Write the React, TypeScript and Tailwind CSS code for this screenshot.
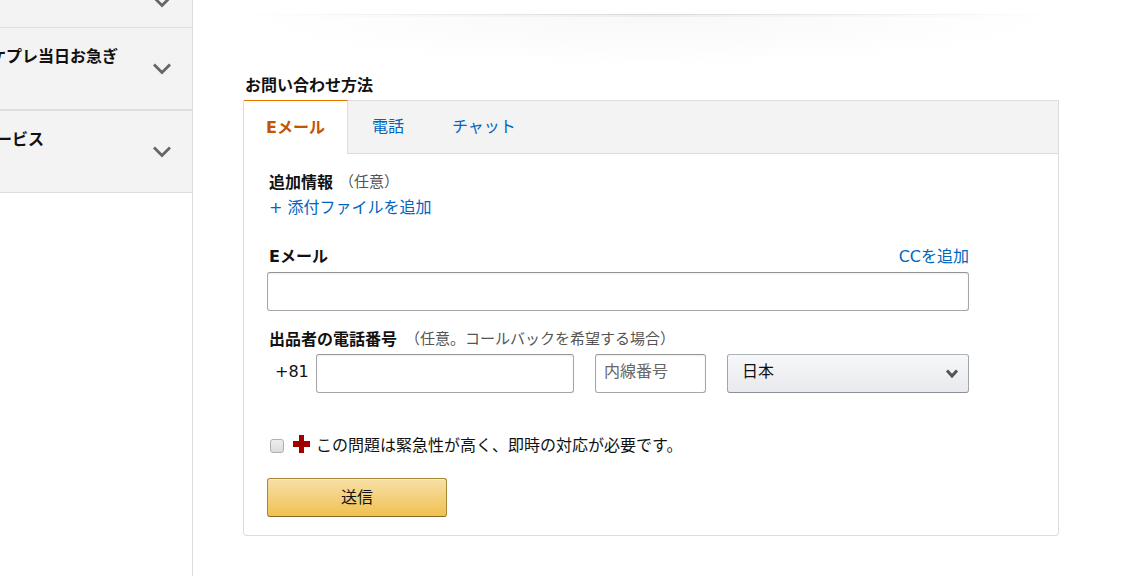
import { useState } from "react";

const tabs = ["Eメール", "電話", "チャット"];

const sections = [
  { title: "ケプレ当日お急ぎ", className: "-ml-2.5" },
  { title: "ービス", className: "-ml-1" },
];

const inputClass =
  "h-[39px] min-w-0 rounded-[3px] border border-[#a6a6a6] border-t-[#949494] bg-white px-2 pb-1 text-base text-[#111] outline-none shadow-[inset_0_1px_2px_rgba(0,0,0,0.07)] placeholder:text-[#666] focus:border-[#e77600]";

function Chevron() {
  return (
    <svg width="18" height="12" viewBox="0 0 18 12" fill="none" stroke="#666" strokeWidth="2.8" aria-hidden="true">
      <path d="M1 1.5 L9 9.5 L17 1.5" />
    </svg>
  );
}

function Sidebar() {
  return (
    <aside className="w-[193px] shrink-0 overflow-hidden border-r border-[#ddd]">
      <button aria-label="開く" className="flex h-7 w-full items-start justify-end border-b border-[#ddd] bg-[#f3f3f3] pr-[21px]">
        <span className="-mt-1">
          <Chevron />
        </span>
      </button>
      {sections.map((s, i) => (
        <button
          key={s.title}
          className={`flex w-full items-center justify-between border-b border-[#ddd] bg-[#f3f3f3] pr-[21px] ${i > 0 ? "h-[83px] border-t" : "h-[82px]"}`}
        >
          <span className={`pb-6 font-bold whitespace-nowrap ${s.className}`}>{s.title}</span>
          <Chevron />
        </button>
      ))}
    </aside>
  );
}

// 区切り線と下方向の薄い影
function Divider() {
  return (
    <div className="mt-3.5 h-[60px]">
      <div className="h-px bg-linear-to-r from-white via-[#d8d8d8] to-white" />
      <div className="h-0.5 bg-linear-to-r from-white via-[#eeeeee] to-white" />
      <div className="h-12 bg-[radial-gradient(50%_100%_at_50%_0%,#f8f8f8,#ffffff)]" />
    </div>
  );
}

function ContactForm() {
  return (
    <form className="pt-4 pr-[89px] pb-[18px] pl-[23px] leading-[25px]" onSubmit={(e) => e.preventDefault()}>
      <div className="flex h-[25px] items-center pl-0.5">
        <span className="font-bold">追加情報</span>
        <span className="ml-1.5 text-[15px] text-[#555]">（任意）</span>
      </div>
      <div className="flex h-[25px] items-center pl-0.5">
        <a href="#attach" className="text-[#0066c0]">+ 添付ファイルを追加</a>
      </div>

      <div className="mt-6 flex h-[25px] items-center justify-between pl-0.5">
        <label htmlFor="email" className="font-bold">Eメール</label>
        <a href="#cc" className="text-[#0066c0]">CCを追加</a>
      </div>
      <input id="email" type="email" className={`mt-[3px] block w-full ${inputClass}`} />

      <div className="mt-4 flex h-[25px] items-center pl-0.5">
        <label htmlFor="phone" className="font-bold">出品者の電話番号</label>
        <span className="ml-2 text-[15px] text-[#555]">（任意。コールバックを希望する場合）</span>
      </div>
      <div className="mt-0.5 flex gap-[21px]">
        <div className="flex min-w-0 flex-1 items-center">
          <span className="w-[49px] shrink-0 pb-1 pl-2">+81</span>
          <input id="phone" type="tel" className={`flex-1 ${inputClass}`} />
        </div>
        <input aria-label="内線番号" placeholder="内線番号" className={`w-[111px] ${inputClass}`} />
        <div className="relative w-[242px]">
          <select
            aria-label="国"
            className="h-[39px] w-full appearance-none rounded-[3px] border border-[#a2a6ac] border-t-[#adb1b8] border-b-[#8d9096] bg-linear-to-b from-[#f7f8fa] to-[#e7e9ec] px-3.5 pb-1 text-base text-[#111]"
          >
            <option>日本</option>
          </select>
          <svg
            className="pointer-events-none absolute top-[15px] right-2.5"
            width="14"
            height="10"
            viewBox="0 0 14 10"
            fill="none"
            stroke="#555"
            strokeWidth="3"
            aria-hidden="true"
          >
            <path d="M2 1.5 L7 7 L12 1.5" />
          </svg>
        </div>
      </div>

      <div className="mt-10 flex h-[25px] items-center pl-[3px]">
        <input
          id="urgent"
          type="checkbox"
          className="size-3.5 appearance-none rounded-[3px] border border-[#b0b0b0] bg-linear-to-b from-[#eee] to-[#dcdcdc] checked:bg-[#0066c0]"
        />
        <svg className="mb-1 ml-[9px]" width="17" height="18" viewBox="0 0 17 18" fill="#a00000" aria-hidden="true">
          <path d="M6 0h5v6h6v6h-6v6H6v-6H0V6h6z" />
        </svg>
        <label htmlFor="urgent" className="ml-1.5">この問題は緊急性が高く、即時の対応が必要です。</label>
      </div>

      <button
        type="submit"
        className="mt-5 block h-[39px] w-[180px] rounded-[3px] border border-[#a88734] border-b-[#846a29] bg-linear-to-b from-[#f7dfa5] to-[#f0c14b] shadow-[inset_0_1px_0_rgba(255,255,255,0.4)]"
      >
        送信
      </button>
    </form>
  );
}

export default function App() {
  const [active, setActive] = useState(0);

  return (
    <div className="flex min-h-screen bg-white font-['DejaVu_Sans','Noto_Sans_CJK_JP',sans-serif] text-base text-[#111]">
      <Sidebar />
      <main className="min-w-0 flex-1 pr-[89px] pl-[50px]">
        <Divider />
        <h2 className="pt-0.5 pl-0.5 leading-5 font-bold">お問い合わせ方法</h2>
        <div className="mt-1 rounded-b border border-t-0 border-[#ddd]">
          <div role="tablist" className="flex h-[54px] bg-[#f3f3f3]">
            {tabs.map((t, i) => (
              <button
                key={t}
                role="tab"
                aria-selected={i === active}
                onClick={() => setActive(i)}
                className={
                  i === active
                    ? "border-t border-r border-t-[#e77600] border-r-[#ddd] bg-white px-[22px] font-bold text-[#c45500]"
                    : "border-y border-[#ddd] px-6 text-[#0066c0]"
                }
              >
                {t}
              </button>
            ))}
            <div className="flex-1 border-y border-[#ddd]" />
          </div>
          <ContactForm />
        </div>
      </main>
    </div>
  );
}
